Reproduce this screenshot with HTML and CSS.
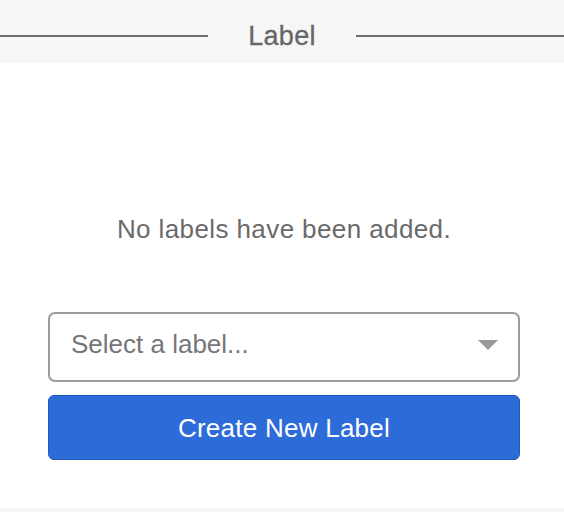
FILE: index.html
```html
<!DOCTYPE html>
<html lang="en">
<head>
<meta charset="utf-8">
<title>Label</title>
<link rel="stylesheet" href="styles.css">
</head>
<body>
<header class="section-header">
  <span class="rule"></span>
  <h2 class="section-title">Label</h2>
  <span class="rule"></span>
</header>
<main class="panel">
  <p class="empty-msg">No labels have been added.</p>
  <div class="select">
    <span class="select-placeholder">Select a label...</span>
    <svg class="select-arrow" width="20" height="10" viewBox="0 0 20 10" aria-hidden="true"><polygon points="0,0 20,0 10,10" fill="#9a9a9a"/></svg>
  </div>
  <button class="btn-primary" type="button">Create New Label</button>
</main>
<footer class="footer-strip"></footer>
</body>
</html>
```
FILE: styles.css
```css
html, body {
  margin: 0;
  padding: 0;
  background: #ffffff;
  font-family: "Liberation Sans", Arial, sans-serif;
}

.section-header {
  height: 63px;
  box-sizing: border-box;
  padding-top: 9px;
  background: #f6f6f6;
  display: flex;
  align-items: center;
}

.rule {
  flex: 1;
  height: 2px;
  background: #6e6e6e;
}

.section-title {
  margin: 0;
  padding: 0 40px;
  font-size: 27px;
  font-weight: normal;
  line-height: 32px;
  letter-spacing: 0.3px;
  color: #666666;
  -webkit-text-stroke: 0.3px #666666;
}

.panel {
  padding: 151px 44px 48px 48px;
  display: flex;
  flex-direction: column;
}

.empty-msg {
  margin: 0 0 68px;
  text-align: center;
  font-size: 26px;
  line-height: 30px;
  letter-spacing: 0.4px;
  color: #6a6a6a;
}

.select {
  height: 70px;
  box-sizing: border-box;
  border: 2px solid #9b9b9b;
  border-radius: 7px;
  padding: 0 20px 0 21px;
  display: flex;
  align-items: center;
  justify-content: space-between;
  margin-bottom: 13px;
}

.select-placeholder {
  font-size: 26px;
  line-height: 30px;
  margin-top: -6px;
  color: #767676;
}

.select-arrow {
  display: block;
  margin-top: -4px;
}

.btn-primary {
  height: 65px;
  box-sizing: border-box;
  border: 1px solid #2558bd;
  border-radius: 6px;
  background: #2d6bd9;
  color: #ffffff;
  font-family: "Liberation Sans", Arial, sans-serif;
  font-size: 26px;
  line-height: 30px;
  letter-spacing: 0.25px;
  padding: 0;
  cursor: pointer;
}

.footer-strip {
  height: 4px;
  background: #f6f6f6;
}
```
